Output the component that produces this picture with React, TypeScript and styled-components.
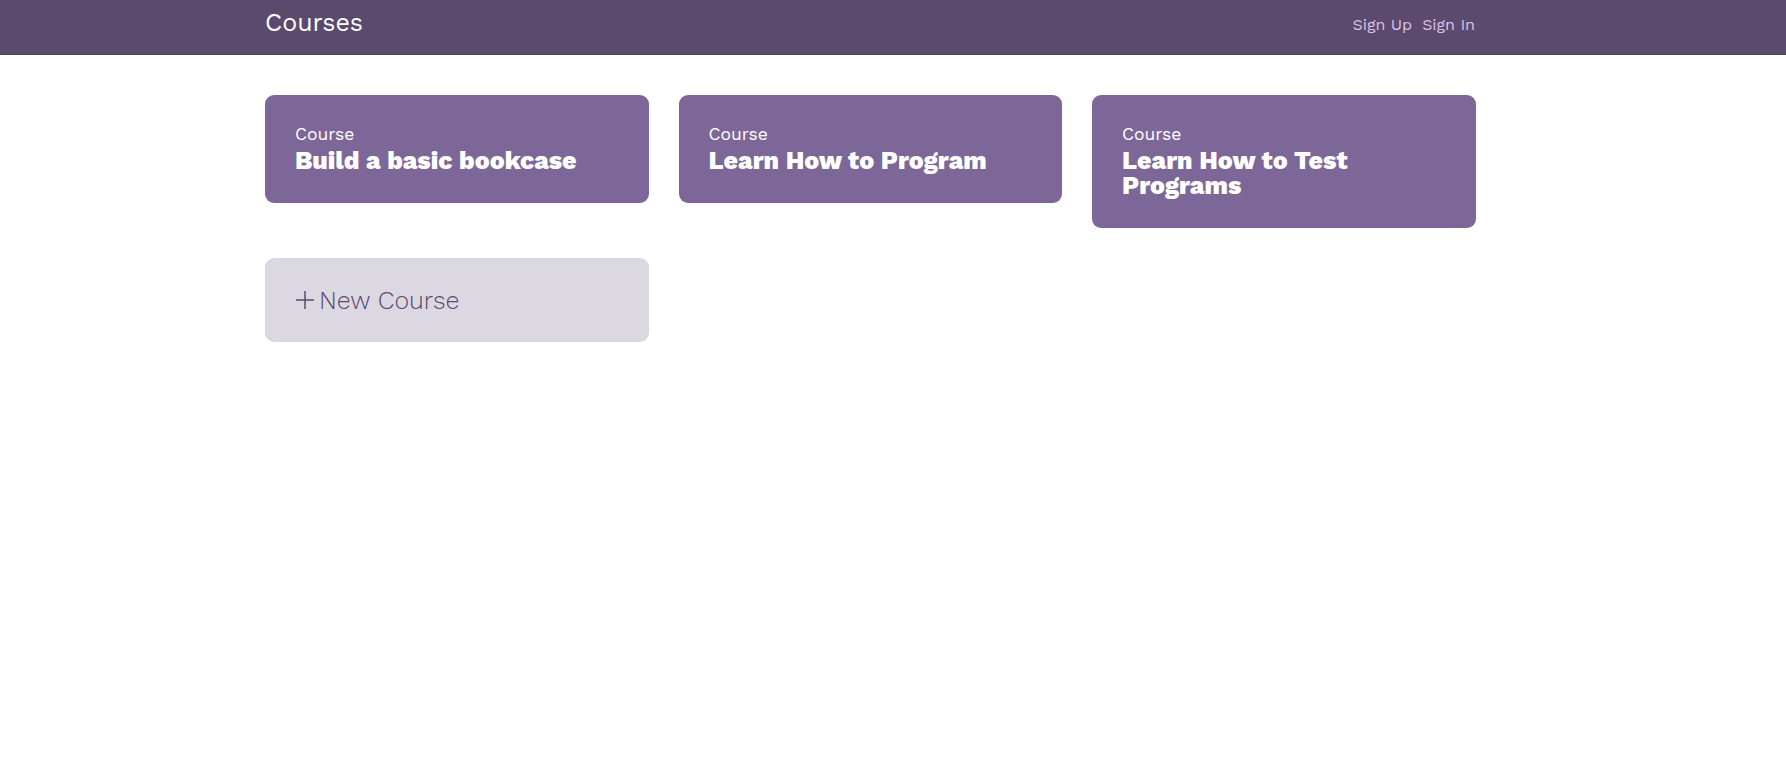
import React from "react";
import styled, { createGlobalStyle } from "styled-components";

const GlobalStyle = createGlobalStyle`
  html, body { margin: 0; padding: 0; background: #ffffff; }
  body { font-family: "Work Sans", Inter, "Open Sans", sans-serif; }
`;

const Header = styled.header`
  height: 54px;
  background: #5b4a6e;
  border-bottom: 1px solid #4f405f;
`;

const HeaderInner = styled.div`
  width: 1210px;
  margin-left: 265px;
  height: 100%;
  display: flex;
  align-items: flex-start;
  justify-content: space-between;
`;

const Brand = styled.h1`
  margin: 8px 0 0;
  font-size: 25px;
  font-weight: 400;
  line-height: 30px;
  color: #ffffff;
`;

const Nav = styled.nav`
  display: flex;
  gap: 10px;
  margin-top: 15px;
`;

const NavLink = styled.a`
  font-size: 16px;
  line-height: 20px;
  color: #dcc3e6;
  text-decoration: none;
`;

const Main = styled.main`
  width: 1210px;
  margin: 40px 0 0 265px;
  display: grid;
  grid-template-columns: repeat(3, 383.5px);
  column-gap: 30px;
  row-gap: 30px;
  align-items: start;
`;

const Card = styled.a`
  display: block;
  box-sizing: border-box;
  background: #7d6798;
  border-radius: 9px;
  padding: 28px 30px 30px 30px;
  color: #ffffff;
  text-decoration: none;
`;

const Label = styled.div`
  font-size: 17.5px;
  line-height: 22px;
  font-weight: 400;
  margin-bottom: 3px;
`;

const Title = styled.div`
  font-size: 25px;
  line-height: 25px;
  font-weight: 800;
`;

const NewCard = styled.a`
  display: flex;
  align-items: center;
  gap: 4px;
  box-sizing: border-box;
  height: 84px;
  background: #dcd8e2;
  border-radius: 9px;
  padding: 0 30px;
  color: #5b4a6e;
  text-decoration: none;
  font-size: 25px;
  font-weight: 300;
`;

const Plus = styled.svg`
  width: 20px;
  height: 20px;
  flex: none;
`;

const courses = [
  "Build a basic bookcase",
  "Learn How to Program",
  "Learn How to Test Programs",
];

export default function App() {
  return (
    <>
      <GlobalStyle />
      <Header>
        <HeaderInner>
          <Brand>Courses</Brand>
          <Nav>
            <NavLink href="#">Sign Up</NavLink>
            <NavLink href="#">Sign In</NavLink>
          </Nav>
        </HeaderInner>
      </Header>
      <Main>
        {courses.map((c) => (
          <Card href="#" key={c}>
            <Label>Course</Label>
            <Title>{c}</Title>
          </Card>
        ))}
        <NewCard href="#">
          <Plus viewBox="0 0 20 20">
            <path d="M10 1v18M1 10h18" stroke="#5b4a6e" strokeWidth="1.5" fill="none" />
          </Plus>
          New Course
        </NewCard>
      </Main>
    </>
  );
}
